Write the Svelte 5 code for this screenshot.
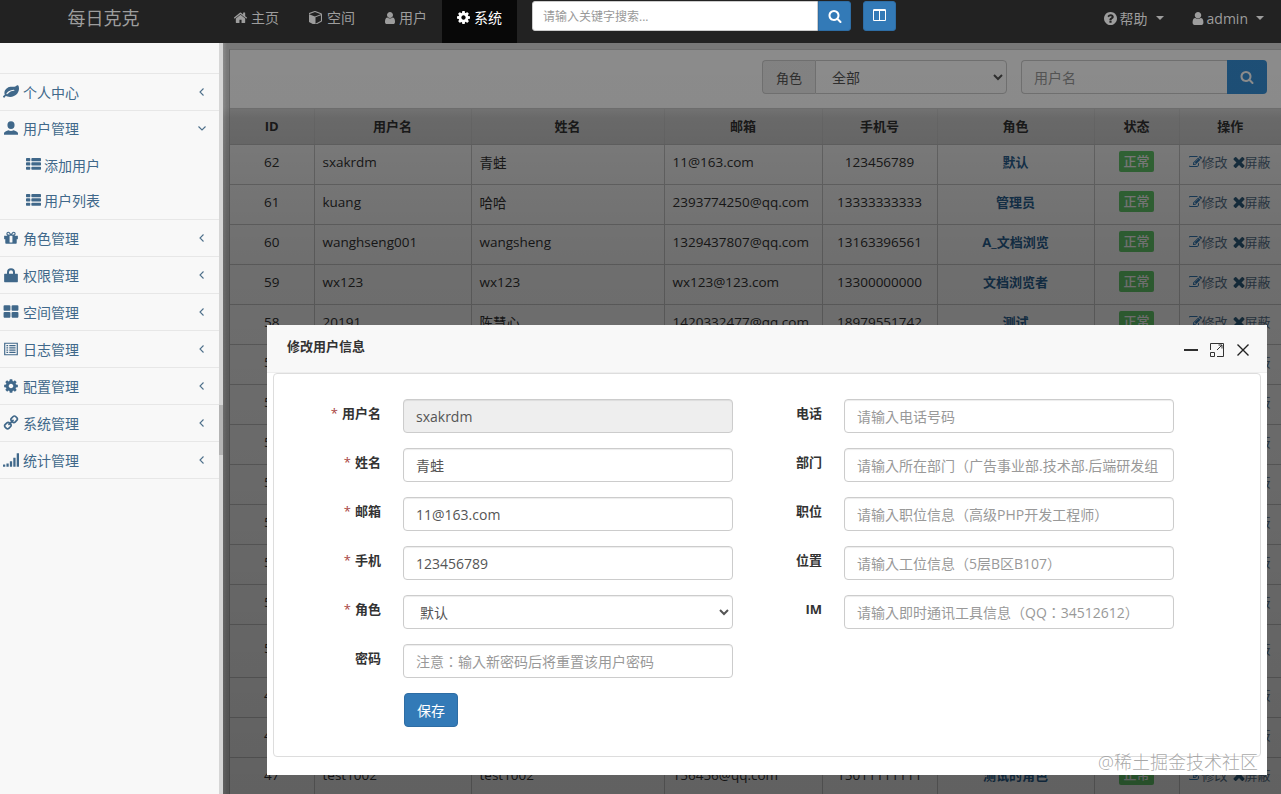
<script>
	const paths = {
		home: 'M1472 992v480q0 26-19 45t-45 19h-384v-384h-256v384h-384q-26 0-45-19t-19-45v-480q0-1 .5-3t.5-3l575-474 575 474q1 2 1 6zm223-69l-62 74q-8 9-21 11h-3q-13 0-21-7l-692-577-692 577q-12 8-24 7-13-2-21-11l-62-74q-8-10-7-23.5t11-21.5l719-599q32-26 76-26t76 26l244 204v-195q0-14 9-23t23-9h192q14 0 23 9t9 23v408l219 182q10 8 11 21.5t-7 23.5z',
		user: 'M1536 1399q0 109-62.5 187t-150.5 78h-854q-88 0-150.5-78t-62.5-187q0-85 8.5-160.5t31.5-152 58.5-131 94-89 134.5-34.5q131 128 313 128t313-128q76 0 134.5 34.5t94 89 58.5 131 31.5 152 8.5 160.5zm-256-887q0 159-112.5 271.5t-271.5 112.5-271.5-112.5-112.5-271.5 112.5-271.5 271.5-112.5 271.5 112.5 112.5 271.5z',
		bust: 'M896 128a400 440 0 0 1 0 880a400 440 0 0 1 0-880zM112 1664v-180c0-180 300-260 500-340q140 90 284 90t284-90c200 80 500 160 500 340v180z',
		cog: 'M1152 896q0-106-75-181t-181-75-181 75-75 181 75 181 181 75 181-75 75-181zm512-109v222q0 12-8 23t-20 13l-185 28q-19 54-39 91 35 50 107 138 10 12 10 25t-9 23q-27 37-99 108t-94 71q-12 0-26-9l-138-108q-44 23-91 38-16 136-29 186-7 28-36 28h-222q-14 0-24.5-8.5t-11.5-21.5l-28-184q-49-16-90-37l-141 107q-10 9-25 9-14 0-25-11-126-114-165-168-7-10-7-23 0-12 8-23 15-21 51-66.5t54-70.5q-27-50-41-99l-183-27q-13-2-21-12.5t-8-23.5v-222q0-12 8-23t19-13l186-28q14-46 39-92-40-57-107-138-10-12-10-24 0-10 9-23 26-36 98.5-107.5t94.5-71.5q13 0 26 10l138 107q44-23 91-38 16-136 29-186 7-28 36-28h222q14 0 24.5 8.5t11.5 21.5l28 184q49 16 90 37l142-107q9-9 24-9 13 0 25 10 129 119 165 170 7 8 7 22 0 12-8 23-15 21-51 66.5t-54 70.5q26 50 41 98l183 28q13 2 21 12.5t8 23.5z',
		search: 'M1216 832q0-185-131.5-316.5t-316.5-131.5-316.5 131.5-131.5 316.5 131.5 316.5 316.5 131.5 316.5-131.5 131.5-316.5zm512 832q0 52-38 90t-90 38q-54 0-90-38l-343-342q-179 124-399 124-143 0-273.5-55.5t-225-150-150-225-55.5-273.5 55.5-273.5 150-225 225-150 273.5-55.5 273.5 55.5 225 150 150 225 55.5 273.5q0 220-124 399l343 343q37 37 37 90z',
		times: 'M1490 1322q0 40-28 68l-136 136q-28 28-68 28t-68-28l-294-294-294 294q-28 28-68 28t-68-28l-136-136q-28-28-28-68t28-68l294-294-294-294q-28-28-28-68t28-68l136-136q28-28 68-28t68 28l294 294 294-294q28-28 68-28t68 28l136 136q28 28 28 68t-28 68l-294 294 294 294q28 28 28 68z',
		large: 'M832 1024v384q0 52-38 90t-90 38h-512q-52 0-90-38t-38-90v-384q0-52 38-90t90-38h512q52 0 90 38t38 90zm0-768v384q0 52-38 90t-90 38h-512q-52 0-90-38t-38-90v-384q0-52 38-90t90-38h512q52 0 90 38t38 90zm896 768v384q0 52-38 90t-90 38h-512q-52 0-90-38t-38-90v-384q0-52 38-90t90-38h512q52 0 90 38t38 90zm0-768v384q0 52-38 90t-90 38h-512q-52 0-90-38t-38-90v-384q0-52 38-90t90-38h512q52 0 90 38t38 90z',
		lock: 'M448 768v-192a448 448 0 0 1 896 0v192h-224v-192a224 224 0 0 0-448 0v192zM192 768h1408q64 0 64 64v800q0 64-64 64h-1408q-64 0-64-64v-800q0-64 64-64z',
		signal: 'M256 1440v192q0 14-9 23t-23 9h-192q-14 0-23-9t-9-23v-192q0-14 9-23t23-9h192q14 0 23 9t9 23zm384-128v320q0 14-9 23t-23 9h-192q-14 0-23-9t-9-23v-320q0-14 9-23t23-9h192q14 0 23 9t9 23zm384-256v576q0 14-9 23t-23 9h-192q-14 0-23-9t-9-23v-576q0-14 9-23t23-9h192q14 0 23 9t9 23zm384-384v960q0 14-9 23t-23 9h-192q-14 0-23-9t-9-23v-960q0-14 9-23t23-9h192q14 0 23 9t9 23zm384-512v1472q0 14-9 23t-23 9h-192q-14 0-23-9t-9-23v-1472q0-14 9-23t23-9h192q14 0 23 9t9 23z',
		help: 'M1024 1376v-192q0-14-9-23t-23-9h-192q-14 0-23 9t-9 23v192q0 14 9 23t23 9h192q14 0 23-9t9-23zm256-672q0-88-55.5-163t-138.5-116-170-41q-243 0-371 213-15 24 8 42l132 100q7 6 19 6 16 0 25-12 53-68 86-92 34-24 86-24 48 0 85.5 26t37.5 59q0 38-20 61t-68 45q-63 28-115.5 86.5t-52.5 125.5v36q0 14 9 23t23 9h192q14 0 23-9t9-23q0-19 21.5-49.5t54.5-49.5q32-18 49-28.5t46-35 44.5-48 28-60.5 12.5-81zm384 192q0 209-103 385.5t-279.5 279.5-385.5 103-385.5-103-279.5-279.5-103-385.5 103-385.5 279.5-279.5 385.5-103 385.5 103 279.5 279.5 103 385.5z',
		list: 'M512 1248v192q0 40-28 68t-68 28h-320q-40 0-68-28t-28-68v-192q0-40 28-68t68-28h320q40 0 68 28t28 68zm0-512v192q0 40-28 68t-68 28h-320q-40 0-68-28t-28-68v-192q0-40 28-68t68-28h320q40 0 68 28t28 68zm1280 512v192q0 40-28 68t-68 28h-960q-40 0-68-28t-28-68v-192q0-40 28-68t68-28h960q40 0 68 28t28 68zm-1280-1024v192q0 40-28 68t-68 28h-320q-40 0-68-28t-28-68v-192q0-40 28-68t68-28h320q40 0 68 28t28 68zm1280 512v192q0 40-28 68t-68 28h-960q-40 0-68-28t-28-68v-192q0-40 28-68t68-28h960q40 0 68 28t28 68zm0-512v192q0 40-28 68t-68 28h-960q-40 0-68-28t-28-68v-192q0-40 28-68t68-28h960q40 0 68 28t28 68z',
		gift: 'M1056 1356v-716h-320v716q0 25 18 38.5t46 13.5h192q28 0 46-13.5t18-38.5zm-456-844h195l-126-161q-26-31-69-31-40 0-68 28t-28 68 28 68 68 28zm688-96q0-40-28-68t-68-28q-43 0-69 31l-125 161h194q40 0 68-28t28-68zm376 256v320q0 14-9 23t-23 9h-96v416q0 40-28 68t-68 28h-1088q-40 0-68-28t-28-68v-416h-96q-14 0-23-9t-9-23v-320q0-14 9-23t23-9h440q-93 0-158.5-65.5t-65.5-158.5 65.5-158.5 158.5-65.5q107 0 168 77l128 165 128-165q61-77 168-77 93 0 158.5 65.5t65.5 158.5-65.5 158.5-158.5 65.5h440q14 0 23 9t9 23z',
		cube: 'M896 1629l640-349v-636l-640 233v752zm-64-865l698-254-698-254-698 254zm832-252v768q0 35-18 65t-49 47l-704 384q-28 16-61 16t-61-16l-704-384q-31-17-49-47t-18-65v-768q0-40 23-73t61-47l704-256q22-8 44-8t44 8l704 256q38 14 61 47t23 73z',
		leaf: 'M1280 704q0-26-19-45t-45-19q-172 0-318 49.5t-259.5 134-235.5 219.5q-19 21-19 45 0 26 19 45t45 19q24 0 45-19 27-24 74-71t67-66q137-124 268.5-176t313.5-52q26 0 45-19t19-45zm512-198q0 95-20 193-46 224-184.5 383t-357.5 268q-214 108-438 108-148 0-286-47-15-5-88-42t-96-37q-16 0-39.5 32t-45 70-52.5 70-60 32q-43 0-63.5-17.5t-45.5-59.5q-2-4-6-11t-5.5-10-3-9.5-1.5-13.5q0-35 31-73.5t68-65.5 68-56 31-48q0-4-14-38t-16-44q-9-51-9-104 0-115 43.5-220t119-184.5 170.5-139 204-95.5q55-18 145-25.5t179.5-9 178.5-6 163.5-24 113.5-56.5l29.5-29.5 29.5-28 27-20 36.5-16 43.5-4.5q39 0 70.5 46t47.5 112 24 124 8 96z',
		link: 'M1520 1216q0-40-28-68l-208-208q-28-28-68-28-42 0-72 32 3 3 19 18.5t21.5 21.5 15 19 13 25.5 3.5 27.5q0 40-28 68t-68 28q-15 0-27.5-3.5t-25.5-13-19-15-21.5-21.5-18.5-19q-33 31-33 73 0 40 28 68l206 207q27 27 68 27 40 0 68-26l147-146q28-28 28-67zm-703-705q0-40-28-68l-206-207q-28-28-68-28-39 0-68 27l-147 146q-28 28-28 67 0 40 28 68l208 208q27 27 68 27 42 0 72-31-3-3-19-18.5t-21.5-21.5-15-19-13-25.5-3.5-27.5q0-40 28-68t68-28q15 0 27.5 3.5t25.5 13 19 15 21.5 21.5 18.5 19q33-31 33-73zm895 705q0 120-85 203l-147 146q-83 83-203 83-121 0-204-85l-206-207q-83-83-83-203 0-123 88-209l-88-88q-86 88-208 88-120 0-204-84l-208-208q-84-84-84-204t85-203l147-146q83-83 203-83 121 0 204 85l206 207q83 83 83 203 0 123-88 209l88 88q86-88 208-88 120 0 204 84l208 208q84 84 84 204z',
		log: 'M128 192h1536v1408h-1536zM256 320v1152h1280v-1152zM384 448h192v128h-192zM704 448h704v128h-704zM384 704h192v128h-192zM704 704h704v128h-704zM384 960h192v128h-192zM704 960h704v128h-704zM384 1216h192v128h-192zM704 1216h704v128h-704z',
		edit: 'M888 1184l116-116-152-152-116 116v56h96v96h56zm440-720q-16-16-33 1l-350 350q-17 17-1 33t33-1l350-350q17-17 1-33zm80 594v190q0 119-84.5 203.5t-203.5 84.5h-832q-119 0-203.5-84.5t-84.5-203.5v-832q0-119 84.5-203.5t203.5-84.5h832q63 0 117 25 15 7 18 23 3 17-9 29l-49 49q-14 14-32 8-23-6-45-6h-832q-66 0-113 47t-47 113v832q0 66 47 113t113 47h832q66 0 113-47t47-113v-126q0-13 9-22l64-64q15-15 35-7t20 29zm-96-738l288 288-672 672h-288v-288zm444 132l-92 92-288-288 92-92q28-28 68-28t68 28l152 152q28 28 28 68t-28 68z',
		columns: 'M160 1408h608v-1152h-640v1120q0 13 9.5 22.5t22.5 9.5zm1376-32v-1120h-640v1152h608q13 0 22.5-9.5t9.5-22.5zm128-1216v1216q0 66-47 113t-113 47h-1344q-66 0-113-47t-47-113v-1216q0-66 47-113t113-47h1344q66 0 113 47t47 113z'
	};

	const topNav = [
		{ icon: 'home', vb: '96 192 1600 1344', cls: 'n-home', label: '主页' },
		{ icon: 'cube', vb: '128 128 1536 1536', cls: 'n-cube', label: '空间' },
		{ icon: 'user', vb: '256 128 1280 1536', cls: 'n-user', label: '用户' },
		{ icon: 'cog', vb: '128 128 1536 1536', cls: 'n-cog', label: '系统', active: true }
	];

	const menuBefore = [{ icon: 'leaf', label: '个人中心' }];
	const menuAfter = [
		{ icon: 'gift', label: '角色管理' },
		{ icon: 'lock', label: '权限管理' },
		{ icon: 'large', label: '空间管理' },
		{ icon: 'log', label: '日志管理' },
		{ icon: 'cog', label: '配置管理' },
		{ icon: 'link', cls: 'mirror', label: '系统管理' },
		{ icon: 'signal', label: '统计管理' }
	];

	const columns = [84, 157, 193, 158, 115, 157, 85, 102];
	const headers = ['ID', '用户名', '姓名', '邮箱', '手机号', '角色', '状态', '操作'];

	const rows = [
		{ id: 62, user: 'sxakrdm', name: '青蛙', mail: '11@163.com', phone: '123456789', role: '默认' },
		{ id: 61, user: 'kuang', name: '哈哈', mail: '2393774250@qq.com', phone: '13333333333', role: '管理员' },
		{ id: 60, user: 'wanghseng001', name: 'wangsheng', mail: '1329437807@qq.com', phone: '13163396561', role: 'A_文档浏览' },
		{ id: 59, user: 'wx123', name: 'wx123', mail: 'wx123@123.com', phone: '13300000000', role: '文档浏览者' },
		{ id: 58, user: '20191', name: '陈慧心', mail: '1420332477@qq.com', phone: '18979551742', role: '测试' },
		{ id: 57, user: 'test1011', name: 'test1011', mail: 'test1011@qq.com', phone: '15011111111', role: '默认' },
		{ id: 56, user: 'test1010', name: 'test1010', mail: 'test1010@qq.com', phone: '15011111111', role: '默认' },
		{ id: 55, user: 'test1009', name: 'test1009', mail: 'test1009@qq.com', phone: '15011111111', role: '默认' },
		{ id: 54, user: 'test1008', name: 'test1008', mail: 'test1008@qq.com', phone: '15011111111', role: '默认' },
		{ id: 53, user: 'test1007', name: 'test1007', mail: 'test1007@qq.com', phone: '15011111111', role: '默认' },
		{ id: 52, user: 'test1006', name: 'test1006', mail: 'test1006@qq.com', phone: '15011111111', role: '默认' },
		{ id: 51, user: 'test1005', name: 'test1005', mail: 'test1005@qq.com', phone: '15011111111', role: '默认' },
		{ id: 50, user: 'test1004', name: 'test1004', mail: 'test1004@qq.com', phone: '15011111111', role: '默认', tall: true },
		{ id: 49, user: 'test1003', name: 'test1003', mail: 'test1003@qq.com', phone: '15011111111', role: '默认' },
		{ id: 48, user: 'test1003', name: 'test1003', mail: 'test1003@qq.com', phone: '15011111111', role: '默认' },
		{ id: 47, user: 'test1002', name: 'test1002', mail: '156456@qq.com', phone: '15011111111', role: '测试的角色' }
	];

	const leftFields = [
		{ label: '用户名', value: 'sxakrdm', required: true, disabled: true },
		{ label: '姓名', value: '青蛙', required: true },
		{ label: '邮箱', value: '11@163.com', required: true },
		{ label: '手机', value: '123456789', required: true },
		{ label: '角色', required: true, select: true },
		{ label: '密码', placeholder: '注意：输入新密码后将重置该用户密码' }
	];
	const rightFields = [
		{ label: '电话', placeholder: '请输入电话号码' },
		{ label: '部门', placeholder: '请输入所在部门（广告事业部.技术部.后端研发组' },
		{ label: '职位', placeholder: '请输入职位信息（高级PHP开发工程师）' },
		{ label: '位置', placeholder: '请输入工位信息（5层B区B107）' },
		{ label: 'IM', placeholder: '请输入即时通讯工具信息（QQ：34512612）' }
	];
</script>

{#snippet icon(name, cls = '', vb = '0 0 1792 1792')}
	<svg class="icon {cls}" viewBox={vb} aria-hidden="true"><path fill="currentColor" fill-rule="evenodd" d={paths[name]} /></svg>
{/snippet}

{#snippet chevron(open = false)}
	<svg class="chev" viewBox="0 0 10 10" aria-hidden="true">
		<path d={open ? 'M1.5 3.5 5 7l3.5-3.5' : 'M6.5 1.5 3 5l3.5 3.5'} fill="none" stroke="currentColor" stroke-width="1.1" />
	</svg>
{/snippet}

{#snippet field(f)}
	<div class="form-row">
		<label class="form-label">{#if f.required}<span class="star">*</span>{/if}{f.label}</label>
		{#if f.select}
			<select class="form-control sel"><option>默认</option></select>
		{:else}
			<input class="form-control" type="text" value={f.value ?? ''} placeholder={f.placeholder} disabled={f.disabled} />
		{/if}
	</div>
{/snippet}

<div class="page">
	<header class="navbar">
		<div class="brand">每日克克</div>
		<nav class="top-nav">
			{#each topNav as item}
				<a class="nav-link" class:active={item.active} href="#top">{@render icon(item.icon, item.cls, item.vb)}{item.label}</a>
			{/each}
		</nav>
		<div class="search">
			<input type="text" placeholder="请输入关键字搜索..." />
			<button class="btn-blue attached">{@render icon('search')}</button>
		</div>
		<button class="btn-blue toggle">{@render icon('columns')}</button>
		<div class="nav-right">
			<a href="#top" class="right-link">{@render icon('help', 'r-help', '128 128 1536 1536')}帮助<span class="caret"></span></a>
			<a href="#top" class="right-link">{@render icon('user', 'r-user', '256 128 1280 1536')}admin<span class="caret"></span></a>
		</div>
	</header>

	<div class="body">
		<aside class="sidebar">
			<ul class="menu">
				{#each menuBefore as m}
					<li class="menu-item">{@render icon(m.icon)}<span>{m.label}</span>{@render chevron()}</li>
				{/each}
				<li class="menu-item open">{@render icon('bust')}<span>用户管理</span>{@render chevron(true)}</li>
				<li class="sub-item">{@render icon('list')}<span>添加用户</span></li>
				<li class="sub-item last">{@render icon('list')}<span>用户列表</span></li>
				{#each menuAfter as m}
					<li class="menu-item">{@render icon(m.icon, m.cls)}<span>{m.label}</span>{@render chevron()}</li>
				{/each}
			</ul>
		</aside>
		<div class="rail"><div class="thumb"></div></div>

		<main class="main">
			<section class="panel">
				<div class="filters">
					<div class="group role">
						<span class="addon">角色</span>
						<select class="filter-select"><option>全部</option></select>
					</div>
					<div class="group name">
						<input class="filter-input" type="text" placeholder="用户名" />
						<button class="filter-btn">{@render icon('search')}</button>
					</div>
				</div>
				<table>
					<colgroup>
						{#each columns as w}<col style="width:{w}px" />{/each}
					</colgroup>
					<thead>
						<tr>{#each headers as h}<th>{h}</th>{/each}</tr>
					</thead>
					<tbody>
						{#each rows as r}
							<tr class:tall={r.tall}>
								<td class="center">{r.id}</td>
								<td>{r.user}</td>
								<td>{r.name}</td>
								<td>{r.mail}</td>
								<td class="center">{r.phone}</td>
								<td class="center role-name">{r.role}</td>
								<td class="center"><span class="badge">正常</span></td>
								<td class="ops">
									<div class="op-wrap">
										<span class="op">{@render icon('edit', 'o-edit', '128 128 1664 1536')}修改</span>
										<span class="op">{@render icon('times', 'o-x', '280 260 1230 1290')}屏蔽</span>
									</div>
								</td>
							</tr>
						{/each}
					</tbody>
				</table>
			</section>
			<div class="shade"></div>

			<div class="modal">
				<div class="modal-title">
					<span>修改用户信息</span>
					<div class="win-btns">
						<span class="win-min"></span>
						<svg class="win-max" viewBox="0 0 14 14" aria-hidden="true">
							<path d="M.5 7V.5h13v13H7M.5 9.5h4v4h-4zM7 7l5-5M8.5 2H12v3.5" fill="none" stroke="#333" stroke-width="1" />
						</svg>
						<svg class="win-close" viewBox="0 0 12 12" aria-hidden="true">
							<path d="M.5.5l11 11M11.5.5l-11 11" fill="none" stroke="#222" stroke-width="1.4" />
						</svg>
					</div>
				</div>
				<div class="modal-body">
					<div class="form-grid">
						<div class="col left">
							{#each leftFields as f}{@render field(f)}{/each}
							<button class="save">保存</button>
						</div>
						<div class="col right">
							{#each rightFields as f}{@render field(f)}{/each}
						</div>
					</div>
				</div>
			</div>
		</main>
	</div>
	<div class="watermark">@稀土掘金技术社区</div>
</div>

<style>
	:global(body) {
		margin: 0;
		overflow: hidden;
		font-family: "Open Sans", "Noto Sans CJK SC", sans-serif;
		font-size: 14px;
		color: #333;
	}
	.page {
		position: relative;
		width: 1281px;
		height: 794px;
		overflow: hidden;
		display: flex;
		flex-direction: column;
	}
	.icon {
		width: 14px;
		height: 14px;
		flex: none;
	}
	a {
		text-decoration: none;
	}

	.navbar {
		height: 43px;
		flex: none;
		display: flex;
		align-items: flex-start;
		background: #222;
	}
	.brand {
		width: 207px;
		padding-right: 12px;
		text-align: center;
		color: #9d9d9d;
		font-size: 18px;
		line-height: 37px;
	}
	.top-nav {
		display: flex;
		height: 43px;
	}
	.nav-link {
		display: flex;
		align-items: center;
		gap: 4px;
		padding: 0 15px 8px;
		color: #9d9d9d;
		line-height: 20px;
	}
	.nav-link.active {
		background: #080808;
		color: #fff;
	}
	.nav-link .icon {
		width: 13px;
		height: 13px;
	}
	.nav-link .n-home {
		height: 11px;
	}
	.nav-link .n-cube {
		margin-right: 1px;
	}
	.nav-link .n-user {
		width: 10px;
		height: 12px;
	}
	.search {
		display: flex;
		margin: 1px 0 0 15px;
	}
	.search input {
		width: 286px;
		height: 30px;
		box-sizing: border-box;
		border: 1px solid #ccc;
		border-radius: 3px 0 0 3px;
		padding: 0 10px;
		font: 12px "Open Sans", "Noto Sans CJK SC", sans-serif;
		background: #fff;
	}
	.search input::placeholder {
		color: #999;
	}
	.btn-blue {
		display: flex;
		align-items: center;
		justify-content: center;
		width: 33px;
		height: 30px;
		padding: 0;
		border: 1px solid #2e6da4;
		background: #337ab7;
		color: #fff;
		border-radius: 3px;
	}
	.btn-blue.attached {
		border-radius: 0 3px 3px 0;
	}
	.toggle {
		margin: 1px 0 0 12px;
	}
	.nav-right {
		margin-left: auto;
		display: flex;
		gap: 28px;
		padding-right: 17px;
	}
	.right-link {
		display: flex;
		align-items: center;
		gap: 3px;
		height: 36px;
		color: #9d9d9d;
	}
	.right-link .r-help {
		width: 13px;
		height: 13px;
	}
	.right-link .r-user {
		width: 12px;
		height: 13px;
	}
	.caret {
		margin-left: 5px;
		border-top: 4px solid;
		border-left: 4px solid transparent;
		border-right: 4px solid transparent;
	}

	.body {
		flex: 1;
		display: flex;
		min-height: 0;
	}
	.sidebar {
		width: 219px;
		flex: none;
		background: #f8f8f8;
		padding-top: 30px;
		box-sizing: border-box;
	}
	.menu {
		list-style: none;
		margin: 0;
		padding: 0;
		border-top: 1px solid #e7e7e7;
	}
	.menu-item,
	.sub-item {
		display: flex;
		align-items: center;
		box-sizing: border-box;
		color: #40688a;
	}
	.menu-item {
		height: 37px;
		padding: 0 12px 0 3px;
		border-bottom: 1px solid #e7e7e7;
	}
	.menu-item .icon {
		width: 16px;
		height: 16px;
	}
	.mirror {
		transform: scaleX(-1);
	}
	.menu-item.open {
		border-bottom: none;
		padding-bottom: 3px;
	}
	.menu-item span {
		margin-left: 4px;
		flex: 1;
	}
	.sub-item {
		height: 36px;
		padding: 0 0 3px 26px;
	}
	.sub-item .icon {
		width: 15px;
		height: 15px;
	}
	.sub-item.last {
		border-bottom: 1px solid #e7e7e7;
	}
	.sub-item span {
		margin-left: 3px;
	}
	.chev {
		width: 10px;
		height: 10px;
		color: #4d6f8a;
	}
	.rail {
		width: 4px;
		flex: none;
		background: #d6d6d6;
	}
	.thumb {
		margin-top: 362px;
		height: 50px;
		background: #b4b4b4;
	}

	.main {
		position: relative;
		flex: 1;
		min-width: 0;
		background: linear-gradient(90deg, #fff, #dcdcdc 4px);
		padding: 6px 0 0 6px;
		overflow: hidden;
	}
	.panel {
		background: #fff;
		border-top: 1px solid #ccc;
		border-left: 1px solid #bbb;
	}
	.filters {
		height: 59px;
		box-sizing: border-box;
		display: flex;
		justify-content: flex-end;
		gap: 14px;
		padding: 10px 14px 0 0;
		border-bottom: 1px solid #ccc;
	}
	.group {
		display: flex;
		height: 34px;
	}
	.addon {
		display: flex;
		align-items: center;
		justify-content: center;
		width: 53px;
		box-sizing: border-box;
		border: 1px solid #ccc;
		border-right: none;
		border-radius: 4px 0 0 4px;
		background: #eee;
		color: #555;
		font-size: 13px;
	}
	.filter-select {
		width: 192px;
		border: 1px solid #ccc;
		border-radius: 0 4px 4px 0;
		padding-left: 12px;
		background: #fff;
		color: #555;
		font: 14px "Open Sans", "Noto Sans CJK SC", sans-serif;
	}
	.filter-input {
		width: 206px;
		box-sizing: border-box;
		border: 1px solid #ccc;
		border-right: none;
		border-radius: 4px 0 0 4px;
		padding: 0 12px;
		font: 14px "Open Sans", "Noto Sans CJK SC", sans-serif;
	}
	.filter-input::placeholder {
		color: #999;
	}
	.filter-btn {
		width: 40px;
		display: flex;
		align-items: center;
		justify-content: center;
		padding: 0;
		border: none;
		border-radius: 0 4px 4px 0;
		background: #3690d8;
		color: #fff;
	}
	table {
		border-collapse: collapse;
		table-layout: fixed;
		width: 1051px;
	}
	th {
		height: 35px;
		padding: 0 8px 1px;
		background: #d6d6d6;
		font-weight: 700;
		font-size: 13px;
		border-left: 1px solid #ccc;
		border-bottom: 1px solid #c4c4c4;
		box-sizing: border-box;
	}
	td {
		height: 40px;
		padding: 0 8px 5px;
		box-sizing: border-box;
		white-space: nowrap;
		overflow: hidden;
		font-size: 13.5px;
		border-left: 1px solid #ccc;
		border-bottom: 1px solid #ccc;
	}
	th:first-child,
	td:first-child {
		border-left: none;
	}
	tr.tall td {
		height: 53px;
	}
	.center {
		text-align: center;
	}
	.role-name {
		font-weight: 700;
		font-size: 13px;
		color: #2a6496;
	}
	.badge {
		display: inline-block;
		width: 35px;
		height: 21px;
		line-height: 21px;
		font-size: 13px;
		font-weight: 500;
		color: #fff;
		background: #66d06e;
		border-radius: 2px;
		vertical-align: middle;
	}
	.ops {
		padding: 0 0 5px 9px;
		font-size: 13px;
		color: #5a7690;
	}
	.op-wrap {
		display: flex;
		gap: 5px;
	}
	.op {
		display: inline-flex;
		align-items: center;
	}
	.op .o-edit {
		width: 13px;
		height: 12px;
		color: #337ab7;
	}
	.op .o-x {
		width: 12px;
		height: 12px;
		color: #2f5f80;
	}
	.shade {
		position: absolute;
		inset: 0;
		background: linear-gradient(
			rgba(0, 0, 0, 0.455),
			rgba(0, 0, 0, 0.46) 8.5%,
			rgba(0, 0, 0, 0.51) 10%,
			rgba(0, 0, 0, 0.535) 15%,
			rgba(0, 0, 0, 0.57) 30%,
			rgba(0, 0, 0, 0.62)
		);
	}

	.modal {
		position: absolute;
		left: 44px;
		top: 282px;
		width: 1000px;
		height: 450px;
		background: #fff;
	}
	.modal-title {
		height: 48px;
		box-sizing: border-box;
		display: flex;
		align-items: center;
		justify-content: space-between;
		padding: 0 18px 6px 20px;
		background: #f8f8f8;
		border-bottom: 1px solid #eee;
		font-size: 13px;
		font-weight: 700;
	}
	.win-btns {
		display: flex;
		align-items: center;
		gap: 12px;
		margin-top: 9px;
	}
	.win-min {
		width: 14px;
		height: 2px;
		background: #2f2f2f;
	}
	.win-max {
		width: 14px;
		height: 14px;
	}
	.win-close {
		width: 12px;
		height: 12px;
		margin-left: 1px;
	}
	.modal-body {
		margin: 0 6px;
		height: 384px;
		box-sizing: border-box;
		border: 1px solid #ddd;
		border-radius: 4px;
		padding-top: 25px;
	}
	.form-grid {
		display: flex;
	}
	.col {
		display: flex;
		flex-direction: column;
		gap: 15px;
	}
	.col.left {
		width: 459px;
	}
	.form-row {
		display: flex;
		align-items: flex-start;
	}
	.form-label {
		flex: none;
		text-align: right;
		font-size: 13px;
		font-weight: 700;
		line-height: 28px;
		margin-right: 22px;
	}
	.left .form-label {
		width: 107px;
	}
	.right .form-label {
		width: 89px;
	}
	.star {
		color: #a94442;
		font-weight: 400;
		margin-right: 4px;
	}
	.form-control {
		width: 330px;
		height: 34px;
		box-sizing: border-box;
		padding: 0 12px;
		border: 1px solid #ccc;
		border-radius: 4px;
		background: #fff;
		color: #555;
		font: 14px "Open Sans", "Noto Sans CJK TC", sans-serif;
		box-shadow: inset 0 1px 1px rgba(0, 0, 0, 0.075);
	}
	.form-control::placeholder {
		color: #999;
	}
	.form-control:disabled {
		background: #eee;
	}
	.sel {
		padding-left: 12px;
	}
	.save {
		align-self: flex-start;
		margin-left: 130px;
		width: 54px;
		height: 34px;
		padding: 0;
		border: 1px solid #2e6da4;
		border-radius: 4px;
		background: #337ab7;
		color: #fff;
		font: 14px "Open Sans", "Noto Sans CJK SC", sans-serif;
	}
	.watermark {
		position: absolute;
		right: 23px;
		bottom: 21px;
		font-size: 18px;
		line-height: 22px;
		color: rgba(140, 140, 140, 0.75);
		font-weight: 300;
	}
</style>
